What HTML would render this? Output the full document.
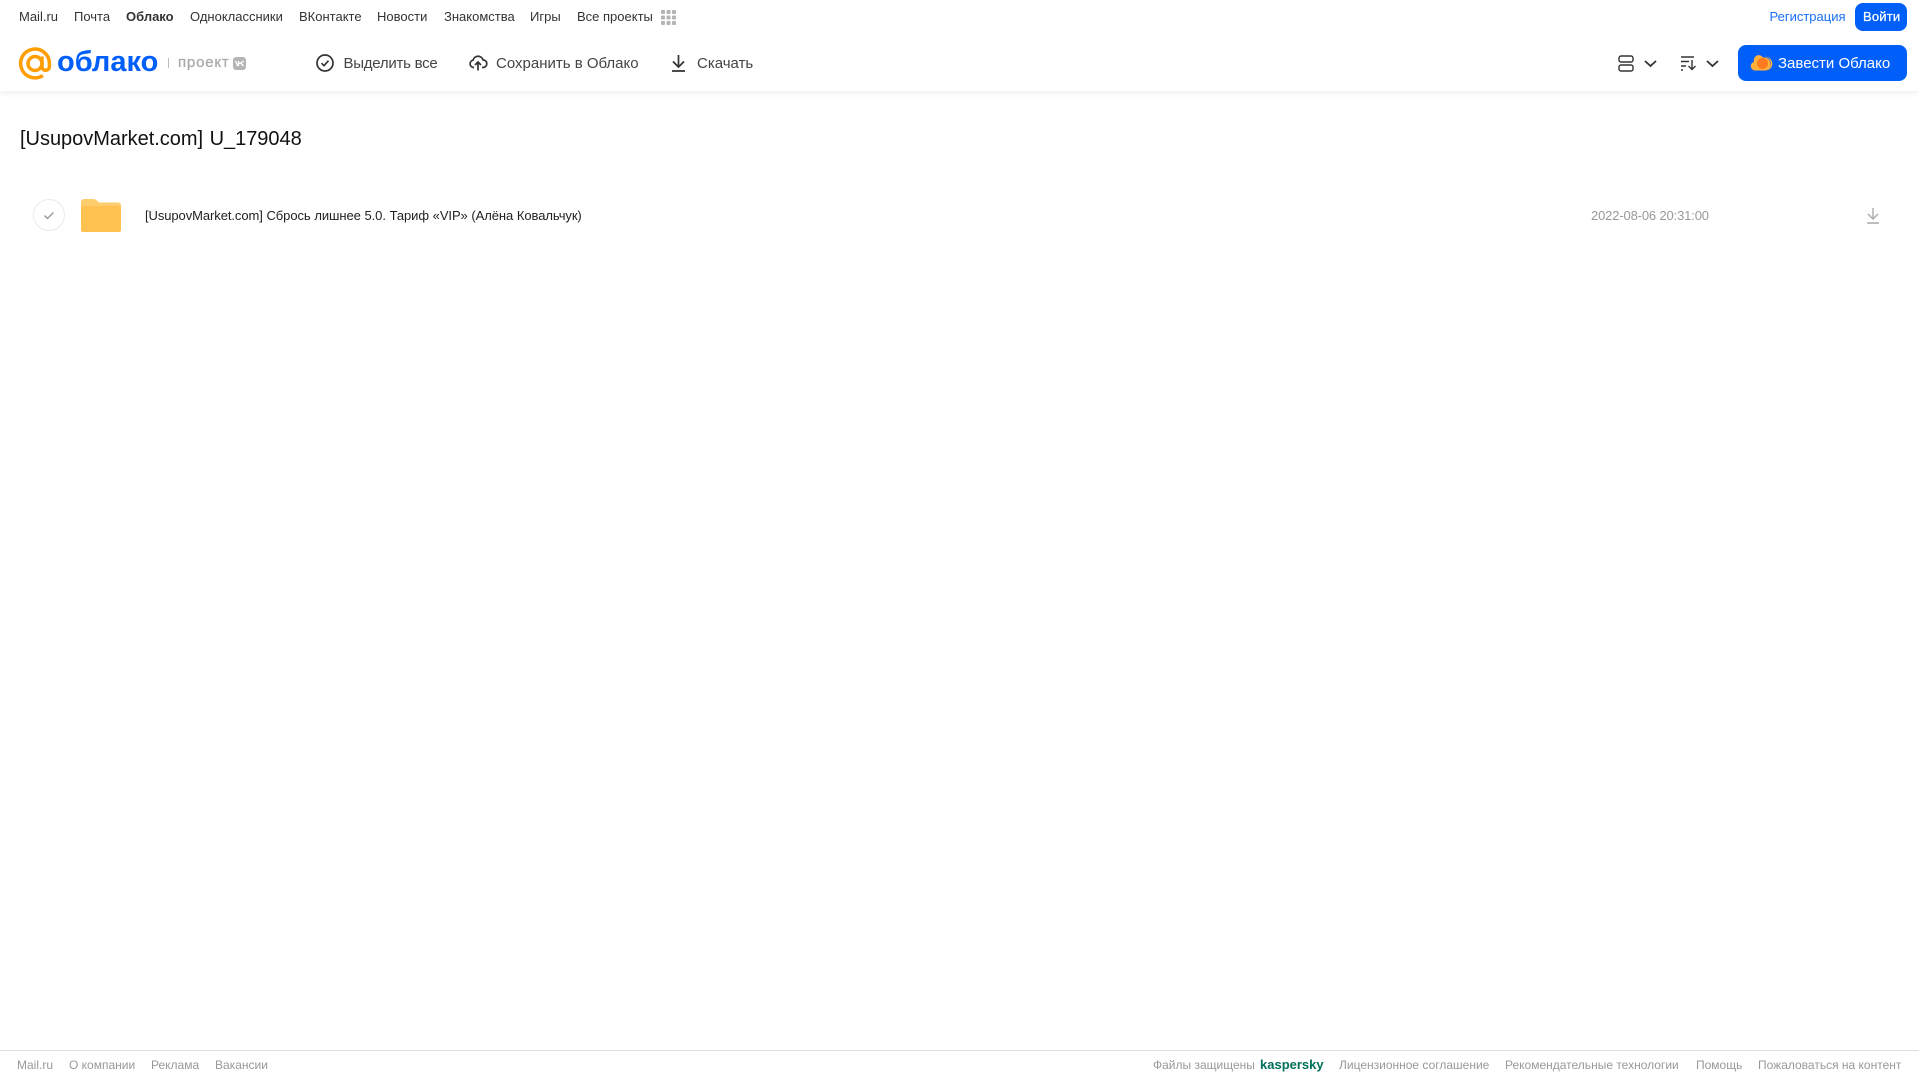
<!DOCTYPE html>
<html lang="ru"><head><meta charset="utf-8"><title>Облако</title>
<style>
html,body{margin:0;padding:0;width:1919px;height:1079px;overflow:hidden;background:#fff;font-family:"Liberation Sans",Arial,sans-serif}
.t{position:absolute;white-space:nowrap;line-height:16px}
.n{font-size:13px;top:9px;color:#333}
.b{font-size:15px;top:55.500px;color:#444}
.f{font-size:12px;top:1057px;color:#999}
svg{position:absolute;overflow:visible}
#hd{position:absolute;left:0;top:0;width:1919px;height:91px;background:#fff;box-shadow:0 2px 6px rgba(0,0,0,.07)}
.btn{position:absolute;background:#005ff9;border-radius:8px}
</style></head><body>
<div id="hd"></div>
<span class="t n" style="left:19px">Mail.ru</span>
<span class="t n" style="left:74px">Почта</span>
<span class="t n" style="left:126px;font-weight:bold">Облако</span>
<span class="t n" style="left:190px">Одноклассники</span>
<span class="t n" style="left:299px">ВКонтакте</span>
<span class="t n" style="left:377px">Новости</span>
<span class="t n" style="left:444px">Знакомства</span>
<span class="t n" style="left:530px">Игры</span>
<span class="t n" style="left:577px">Все проекты</span>
<svg style="left:660.500px;top:10px" width="15" height="15" fill="#b4b4b4"><rect x="0" y="0" width="4" height="4" rx="1"/><rect x="5.500" y="0" width="4" height="4" rx="1"/><rect x="11" y="0" width="4" height="4" rx="1"/><rect x="0" y="5.500" width="4" height="4" rx="1"/><rect x="5.500" y="5.500" width="4" height="4" rx="1"/><rect x="11" y="5.500" width="4" height="4" rx="1"/><rect x="0" y="11" width="4" height="4" rx="1"/><rect x="5.500" y="11" width="4" height="4" rx="1"/><rect x="11" y="11" width="4" height="4" rx="1"/></svg>

<svg style="left:19px;top:47px" width="33" height="33" fill="none" stroke="#ff9e00" stroke-width="3.500"><circle cx="16" cy="16.500" r="7"/><path d="M23 9.500v10a3.700 3.700 0 0 0 7.400 0v-3a14.400 14.400 0 1 0-6.500 12"/></svg>
<span class="t" style="left:57px;top:44px;font-size:29px;line-height:36px;font-weight:bold;color:#005ff9">облако</span>
<div style="position:absolute;left:168px;top:58px;width:1px;height:10px;background:#bbb"></div>
<span class="t" style="left:178px;top:55px;font-size:15px;color:#aaa;letter-spacing:.8px;-webkit-text-stroke:.3px #aaa">проект</span>
<div style="position:absolute;left:233px;top:57px;width:13px;height:13px;border-radius:3px;background:#b5b5b5"></div>
<svg style="left:235px;top:60px" width="9" height="7" fill="none" stroke="#fff" stroke-width="1.300"><path d="M.5 1l2 4.500h1V1M8.500 1L5.800 3.200 8.500 6M3.500 3.300h2"/></svg>

<svg style="left:316px;top:54px" width="18" height="18" fill="none" stroke="#333" stroke-width="1.700"><circle cx="9" cy="9" r="8"/><path d="M5.500 9.200l2.500 2.500 4.500-5"/></svg>
<span class="t b" style="left:343.500px;letter-spacing:-.25px">Выделить все</span>
<svg style="left:469px;top:54px" width="18" height="17" fill="none" stroke="#333" stroke-width="1.700"><path d="M5 13.500H4.500a3.700 3.700 0 0 1-.5-7.300 5.200 5.200 0 0 1 10-.3 3.800 3.800 0 0 1 0 7.600H13M9 16.500V8.500M6 11l3-3 3 3"/></svg>
<span class="t b" style="left:496px">Сохранить в Облако</span>
<svg style="left:671px;top:54px" width="15" height="18" fill="none" stroke="#333" stroke-width="1.700"><path d="M7.500 1v11.500M2 7.500l5.500 5.500L13 7.500M1 17h13"/></svg>
<span class="t b" style="left:697px">Скачать</span>

<svg style="left:1618px;top:55px" width="16" height="17" fill="none" stroke="#333" stroke-width="1.400"><rect x="1" y="1" width="14" height="6" rx="2"/><rect x="1" y="10" width="14" height="6" rx="2"/></svg>
<svg style="left:1643.500px;top:60px" width="13" height="8" fill="none" stroke="#333" stroke-width="1.800"><path d="M1 1l5.500 5L12 1"/></svg>
<svg style="left:1681px;top:56px" width="16" height="15" fill="none" stroke="#333" stroke-width="1.400"><path d="M0 1h13M0 5.500h8M0 10h5M0 14h2M11 4v9.500M7.500 10l3.500 3.500 3.500-3.500"/></svg>
<svg style="left:1705.500px;top:60px" width="13" height="8" fill="none" stroke="#333" stroke-width="1.800"><path d="M1 1l5.500 5L12 1"/></svg>

<span class="t n" style="left:1769.500px;color:#1a6ff5">Регистрация</span>
<div class="btn" style="left:1855px;top:3px;width:52px;height:28px"></div>
<span class="t" style="left:1863px;top:9px;font-size:13px;color:#fff;letter-spacing:.2px;-webkit-text-stroke:.25px #fff">Войти</span>
<div class="btn" style="left:1738px;top:45px;width:169px;height:36px"></div>
<svg style="left:1750px;top:54px" width="20" height="17"><path d="M5 16.500a4.500 4.500 0 0 1-1-8.800A5 5 0 0 1 13 3.500a6 6 0 0 1 2 13z" fill="#ffb03a"/><circle cx="12.500" cy="9.500" r="5.500" fill="#ff7a1f"/><path d="M15 2.800a6.500 6.500 0 0 1 1 13.700h-3a6 6 0 0 0 2-13.700z" fill="#ffb03a"/></svg>
<span class="t b" style="left:1778px;color:#fff">Завести Облако</span>

<span class="t" style="left:20px;top:126.500px;font-size:20px;line-height:24px;color:#111;word-spacing:1px;letter-spacing:-.02px">[UsupovMarket.com] U_179048</span>

<svg style="left:33px;top:199px" width="32" height="32" fill="none"><circle cx="16" cy="16" r="15.500" stroke="#ebebeb"/><path d="M11.500 16.500l3 3 6-6" stroke="#999" stroke-width="1.400"/></svg>
<svg style="left:81px;top:198px" width="40" height="35"><path d="M0 4a3 3 0 0 1 3-3h8c3 0 4 .5 6 2.500 1 1 2 1 4 1h16a3 3 0 0 1 3 3v3H0z" fill="#ffcc6e"/><path d="M0 8h40v24a2 2 0 0 1-2 2H2a2 2 0 0 1-2-2z" fill="#ffc14f"/></svg>
<span class="t" style="left:145px;top:207.500px;font-size:13px;color:#222;letter-spacing:-.08px;word-spacing:.2px">[UsupovMarket.com] Сбрось лишнее 5.0. Тариф «VIP» (Алёна Ковальчук)</span>
<span class="t" style="left:1591px;top:207.500px;font-size:13px;color:#999;letter-spacing:-.15px">2022-08-06 20:31:00</span>
<svg style="left:1866px;top:207px" width="14" height="17" fill="none" stroke="#aaa" stroke-width="1.400"><path d="M7 1v11M2 7l5 5 5-5M1 16h12"/></svg>

<div style="position:absolute;left:0;top:1050px;width:1919px;height:1px;background:#ddd"></div>
<span class="t f" style="left:17px">Mail.ru</span>
<span class="t f" style="left:69px">О компании</span>
<span class="t f" style="left:151px">Реклама</span>
<span class="t f" style="left:215px">Вакансии</span>
<span class="t f" style="left:1153px">Файлы защищены</span>
<span class="t f" style="left:1260px;font-size:13px;font-weight:bold;color:#00705a">kaspersky</span>
<span class="t f" style="left:1339px">Лицензионное соглашение</span>
<span class="t f" style="left:1505px">Рекомендательные технологии</span>
<span class="t f" style="left:1696px">Помощь</span>
<span class="t f" style="left:1758px">Пожаловаться на контент</span>
</body></html>
